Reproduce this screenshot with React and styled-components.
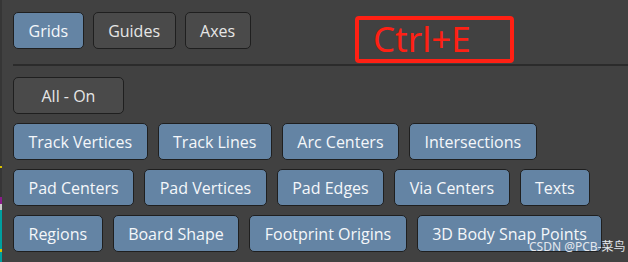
import styled, { createGlobalStyle } from 'styled-components'

const GlobalStyle = createGlobalStyle`
    html, body {
        margin: 0;
        padding: 0;
        background: #414141;
        overflow: hidden;
    }
`

const tabs = [
    { label: 'Grids', active: true },
    { label: 'Guides', active: false },
    { label: 'Axes', active: false },
]

const rows = [
    ['Track Vertices', 'Track Lines', 'Arc Centers', 'Intersections'],
    ['Pad Centers', 'Pad Vertices', 'Pad Edges', 'Via Centers', 'Texts'],
    ['Regions', 'Board Shape', 'Footprint Origins', '3D Body Snap Points'],
]

export default function App() {
    return (
        <>
            <GlobalStyle />
            <Screen>
                <EdgeStrip />
                <Panel>
                    <TopRow>
                        {tabs.map((t) => (
                            <ToggleButton key={t.label} $on={t.active}>{t.label}</ToggleButton>
                        ))}
                    </TopRow>
                    <Divider />
                    <Body>
                        <ToggleButton $on={false} $wide>All - On</ToggleButton>
                        {rows.map((row, i) => (
                            <ButtonRow key={i}>
                                {row.map((label) => (
                                    <ToggleButton key={label} $on>{label}</ToggleButton>
                                ))}
                            </ButtonRow>
                        ))}
                    </Body>
                    <Shortcut>Ctrl+E</Shortcut>
                    <Watermark>CSDN @PCB-菜鸟</Watermark>
                </Panel>
            </Screen>
        </>
    )
}

const Screen = styled.div`
    display: flex;
    width: 628px;
    height: 262px;
    background: #414141;
    font-family: "Open Sans", "Noto Sans", sans-serif;
`

// bits of another window peeking in on the left edge
const EdgeStrip = styled.div`
    width: 2px;
    flex: none;
    background: linear-gradient(
        to bottom,
        #363636 0px,
        #363636 166px,
        #d8c000 166px,
        #d8c000 168px,
        #363636 168px,
        #363636 197px,
        #8a1a8a 197px,
        #8a1a8a 204px,
        #c8c8c8 204px,
        #c8c8c8 210px,
        #00a0a0 210px,
        #00a0a0 249px,
        #d8c000 249px,
        #d8c000 252px,
        #00a0a0 252px,
        #00a0a0 262px
    );
`

const Panel = styled.div`
    position: relative;
    flex: 1;
    display: flex;
    flex-direction: column;
    padding: 12px 0 0 11px;
`

const TopRow = styled.div`
    display: flex;
    gap: 9px;
`

const Divider = styled.div`
    height: 2px;
    margin: 15px 0 11px;
    background: #2b2b2b;
`

const Body = styled.div`
    display: flex;
    flex-direction: column;
    align-items: flex-start;
    gap: 9px;
`

const ButtonRow = styled.div`
    display: flex;
    gap: 10px;
`

const ToggleButton = styled.div`
    box-sizing: border-box;
    height: 37px;
    display: flex;
    align-items: center;
    justify-content: center;
    padding: 0 ${(p) => (p.$wide ? '27.5px' : '14.5px')};
    border: 1px solid #1f1f1f;
    border-radius: 5px;
    font-size: 16px;
    white-space: nowrap;
    background: ${(p) => (p.$on ? '#6484a4' : '#4a4a4a')};
    color: ${(p) => (p.$on ? '#f4f7fa' : '#e6e6e6')};
`

const Shortcut = styled.div`
    position: absolute;
    left: 353px;
    top: 16px;
    width: 159px;
    height: 47px;
    box-sizing: border-box;
    border: 4px solid #ff2014;
    border-radius: 4px;
    color: #ff2014;
    font-family: "Noto Sans", "Open Sans", sans-serif;
    font-size: 35px;
    line-height: 38px;
    padding-left: 14px;
`

const Watermark = styled.div`
    position: absolute;
    left: 527px;
    top: 237px;
    font-family: "Noto Sans", "Noto Sans CJK SC", sans-serif;
    font-size: 12px;
    white-space: nowrap;
    color: #e4e8ee;
`
